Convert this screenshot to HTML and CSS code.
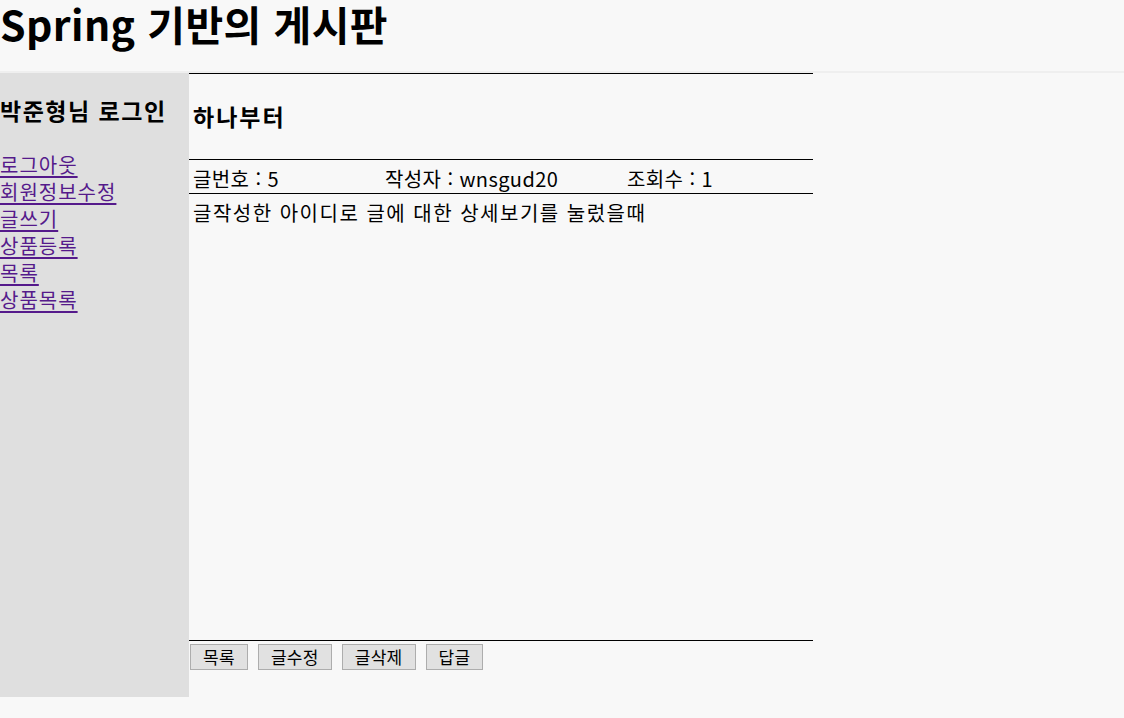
FILE: index.html
```html
<!DOCTYPE html>
<html lang="ko">
<head>
<meta charset="utf-8">
<title>Spring 기반의 게시판</title>
<link rel="stylesheet" href="styles.css">
</head>
<body>
<header class="top">
  <h1 class="site-title">Spring 기반의 게시판</h1>
</header>
<div class="layout">
  <aside class="side">
    <h3 class="side-title">박준형님 로그인</h3>
    <nav class="side-nav">
      <a href="#">로그아웃</a>
      <a href="#">회원정보수정</a>
      <a href="#">글쓰기</a>
      <a href="#">상품등록</a>
      <a href="#">목록</a>
      <a href="#">상품목록</a>
    </nav>
  </aside>
  <main class="board">
    <div class="post-title">하나부터</div>
    <div class="post-meta">
      <span class="meta-no">글번호 : 5</span>
      <span class="meta-writer">작성자 : wnsgud20</span>
      <span class="meta-hit">조회수 : 1</span>
    </div>
    <div class="post-body">글작성한 아이디로 글에 대한 상세보기를 눌렀을때</div>
    <div class="post-actions">
      <button class="btn">목록</button>
      <button class="btn">글수정</button>
      <button class="btn">글삭제</button>
      <button class="btn">답글</button>
    </div>
  </main>
</div>
</body>
</html>
```

FILE: styles.css
```css
html, body {
  margin: 0;
  padding: 0;
  background: #f8f8f8;
}
body {
  font-family: "Noto Sans CJK KR", "Noto Sans", sans-serif;
  font-size: 20px;
  color: #000;
}
.top {
  height: 71px;
  border-bottom: 2px solid #efefef;
}
.site-title {
  margin: 0;
  font-size: 41px;
  font-weight: 700;
  line-height: 46px;
  letter-spacing: 0.4px;
}
.layout {
  display: flex;
  align-items: flex-start;
}
.side {
  width: 189px;
  height: 624px;
  background: #dfdfdf;
  box-sizing: border-box;
  padding-top: 21px;
}
.side-title {
  margin: 0 0 25px 0;
  font-size: 23px;
  font-weight: 700;
  line-height: 32px;
  letter-spacing: 1.5px;
}
.side-nav {
  display: flex;
  flex-direction: column;
  align-items: flex-start;
}
.side-nav a {
  color: #551a8b;
  font-size: 20px;
  line-height: 27px;
  letter-spacing: 1px;
  text-decoration: underline;
  text-underline-offset: 3px;
}
.board {
  width: 624px;
  border-top: 1px solid #000;
}
.post-title {
  height: 85px;
  box-sizing: border-box;
  padding: 26px 0 0 4px;
  font-size: 23px;
  font-weight: 700;
  line-height: 32px;
  letter-spacing: 2px;
}
.post-meta {
  display: flex;
  height: 33px;
  border-top: 1px solid #000;
  border-bottom: 1px solid #000;
  padding-left: 4px;
  font-size: 20px;
  line-height: 38px;
  letter-spacing: 0.4px;
}
.meta-no { width: 192px; }
.meta-writer { width: 242px; }
.post-body {
  height: 446px;
  padding-left: 4px;
  font-size: 20px;
  line-height: 38px;
  letter-spacing: 1.5px;
}
.post-actions {
  display: flex;
  gap: 10px;
  border-top: 1px solid #000;
  padding: 3px 0 0 1px;
}
.btn {
  height: 26px;
  padding: 0 12px;
  margin: 0;
  background: #e1e1e1;
  border: 1px solid #adadad;
  border-radius: 0;
  font-family: "Noto Sans CJK KR", "Noto Sans", sans-serif;
  font-size: 17px;
  line-height: 22px;
  letter-spacing: 0.3px;
  color: #000;
}
```
